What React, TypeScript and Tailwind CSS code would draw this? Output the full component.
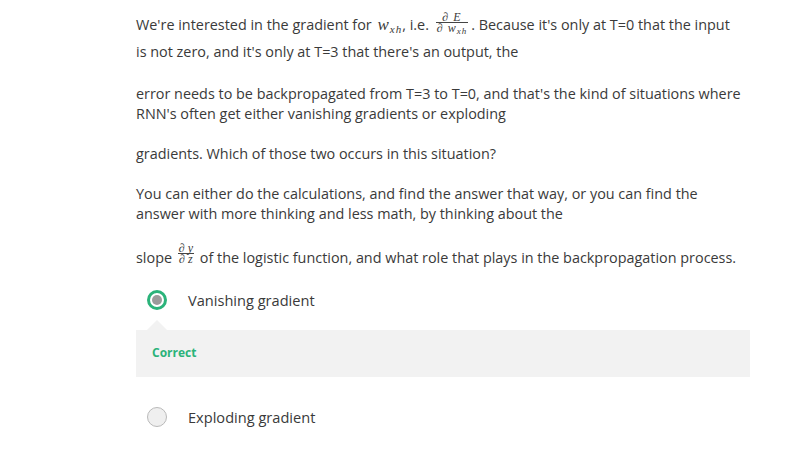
import React from "react";

function Frac({ num, den, wide }: { num: React.ReactNode; den: React.ReactNode; wide?: boolean }) {
  return (
    <span
      className={
        wide
          ? "mx-[3px] inline-block text-center align-[-2px] font-['Liberation_Serif','DejaVu_Serif',serif] text-[12px] italic tracking-[1px]"
          : "mx-[2px] inline-block text-center align-baseline font-['Liberation_Serif','DejaVu_Serif',serif] text-[12px] italic"
      }
    >
      <span className="block px-[1px] leading-[9px]">{num}</span>
      <span className="block border-t border-[#444] px-[1px] pt-[1px] leading-[9px]">{den}</span>
    </span>
  );
}

function W() {
  return (
    <span className="ml-[2px] font-['Liberation_Serif','DejaVu_Serif',serif] text-[17px] italic tracking-[1px]">
      w<sub className="text-[11px] leading-none">xh</sub>
    </span>
  );
}

function Radio({ selected }: { selected?: boolean }) {
  if (selected) {
    return (
      <span className="flex h-5 w-5 items-center justify-center rounded-full border-[3px] border-[#2bb37a] bg-white">
        <span className="h-[10px] w-[10px] rounded-full bg-[#9b9b9b]" />
      </span>
    );
  }
  return <span className="h-5 w-5 rounded-full border border-[#b9b9b9] bg-[#efefef]" />;
}

export default function App() {
  return (
    <div className="min-h-[463px] bg-white font-['Open_Sans',sans-serif] text-[14.4px] leading-[20px] text-[#3a3a3a]">
      <div className="ml-[136px] w-[614px] pt-[11px]">
        <p className="mb-[19px] leading-[27px]">
          We're interested in the gradient for <W />, i.e.{" "}
          <Frac
            wide
            num="∂ E"
            den={
              <>
                ∂ w<sub className="text-[9px] leading-none">xh</sub>
              </>
            }
          />
          . Because it's only at T=0 that the input
          <br />
          is not zero, and it's only at T=3 that there's an output, the
        </p>
        <p className="mb-[20px]">
          error needs to be backpropagated from T=3 to T=0, and that's the kind of situations where RNN's often get
          either vanishing gradients or exploding
        </p>
        <p className="mb-[20px]">gradients. Which of those two occurs in this situation?</p>
        <p className="mb-[20px]">
          You can either do the calculations, and find the answer that way, or you can find the answer with more
          thinking and less math, by thinking about the
        </p>
        <p>
          slope <Frac num="∂ y" den="∂ z" /> of the logistic function, and what role that plays in the
          backpropagation process.
        </p>

        <div className="mt-[22px]">
          <div className="flex items-center gap-[21px] pl-[11px] text-[14.6px]">
            <Radio selected />
            <span>Vanishing gradient</span>
          </div>
          <div className="relative mt-[20px] h-[47px] bg-[#f2f2f2] pl-4 pt-[12px]">
            <span className="absolute -top-[10px] left-[11px] h-0 w-0 border-x-[10px] border-b-[10px] border-x-transparent border-b-[#f2f2f2]" />
            <span className="text-[12px] font-bold text-[#2bb37a]">Correct</span>
          </div>
          <div className="mt-[30px] flex items-center gap-[21px] pl-[11px] text-[14.6px]">
            <Radio />
            <span>Exploding gradient</span>
          </div>
        </div>
      </div>
    </div>
  );
}
